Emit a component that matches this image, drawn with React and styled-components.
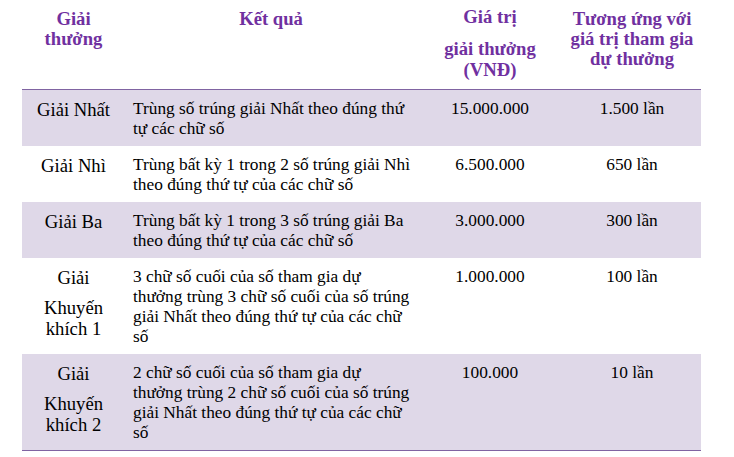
import React from 'react'
import styled, { createGlobalStyle } from 'styled-components'

const GlobalStyle = createGlobalStyle`
  body {
    margin: 0;
    background: #fff;
    font-family: "Liberation Serif", "Times New Roman", serif;
    color: #000;
  }
`

const prizes = [
  {
    name: ['Giải Nhất'],
    result: 'Trùng số trúng giải Nhất theo đúng thứ tự các chữ số',
    value: '15.000.000',
    ratio: '1.500 lần',
  },
  {
    name: ['Giải Nhì'],
    result: 'Trùng bất kỳ 1 trong 2 số trúng giải Nhì theo đúng thứ tự của các chữ số',
    value: '6.500.000',
    ratio: '650 lần',
  },
  {
    name: ['Giải Ba'],
    result: 'Trùng bất kỳ 1 trong 3 số trúng giải Ba theo đúng thứ tự của các chữ số',
    value: '3.000.000',
    ratio: '300 lần',
  },
  {
    name: ['Giải', 'Khuyến khích 1'],
    result: '3 chữ số cuối của số tham gia dự thưởng trùng 3 chữ số cuối của số trúng giải Nhất theo đúng thứ tự của các chữ số',
    value: '1.000.000',
    ratio: '100 lần',
  },
  {
    name: ['Giải', 'Khuyến khích 2'],
    result: '2 chữ số cuối của số tham gia dự thưởng trùng 2 chữ số cuối của số trúng giải Nhất theo đúng thứ tự của các chữ số',
    value: '100.000',
    ratio: '10 lần',
  },
]

function App() {
  return (
    <>
      <GlobalStyle />
      <Page>
        <PrizeTable>
          <colgroup>
            <col style={{ width: 103 }} />
            <col style={{ width: 292 }} />
            <col style={{ width: 146 }} />
            <col style={{ width: 138 }} />
          </colgroup>
          <thead>
            <tr>
              <HeadCell>
                <Line>Giải</Line>
                <Line>thưởng</Line>
              </HeadCell>
              <HeadCell>
                <Line>Kết quả</Line>
              </HeadCell>
              <HeadCell>
                <Line $gap={10} $lift={2}>Giá trị</Line>
                <Line>giải thưởng</Line>
                <Line $lift={-1}>(VNĐ)</Line>
              </HeadCell>
              <HeadCell>
                <Line>Tương ứng với</Line>
                <Line>giá trị tham gia</Line>
                <Line>dự thưởng</Line>
              </HeadCell>
            </tr>
          </thead>
          <tbody>
            {prizes.map((p, i) => (
              <Row key={i} $shaded={i % 2 === 0}>
                <NameCell>
                  {p.name.map((n, j) => (
                    <Line key={j} $gap={j < p.name.length - 1 ? 9 : 0}>{n}</Line>
                  ))}
                </NameCell>
                <ResultCell>{p.result}</ResultCell>
                <NumberCell>{p.value}</NumberCell>
                <NumberCell>{p.ratio}</NumberCell>
              </Row>
            ))}
          </tbody>
        </PrizeTable>
      </Page>
    </>
  )
}

export default App


const Page = styled.div`
  padding: 0 0 0 22px;
`

const PrizeTable = styled.table`
  width: 679px;
  table-layout: fixed;
  border-collapse: collapse;
  border-spacing: 0;
  border-bottom: 1px solid #8064a2;
`

const HeadCell = styled.th`
  height: 80px;
  padding: 9px 4px 0;
  vertical-align: top;
  text-align: center;
  font-size: 18.67px;
  line-height: 20px;
  font-weight: 700;
  color: #7030a0;
  border-bottom: 1px solid #8064a2;
`

const Line = styled.span`
  display: block;
  margin-top: ${p => (p.$lift ? -p.$lift : 0)}px;
  margin-bottom: ${p => (p.$gap || 0) + (p.$lift || 0)}px;
`

const Row = styled.tr`
  background: ${p => (p.$shaded ? '#dfd8e8' : '#fff')};
`

const Cell = styled.td`
  padding: 9px 5px 7px 8px;
  vertical-align: top;
  font-size: 17.33px;
  line-height: 20px;
`

const NameCell = styled(Cell)`
  padding-left: 8px;
  padding-right: 8px;
  text-align: center;
  font-size: 18.67px;
  line-height: 21px;
`

const ResultCell = styled(Cell)`
  text-align: left;
`

const NumberCell = styled(Cell)`
  padding-left: 4px;
  padding-right: 4px;
  text-align: center;
`
